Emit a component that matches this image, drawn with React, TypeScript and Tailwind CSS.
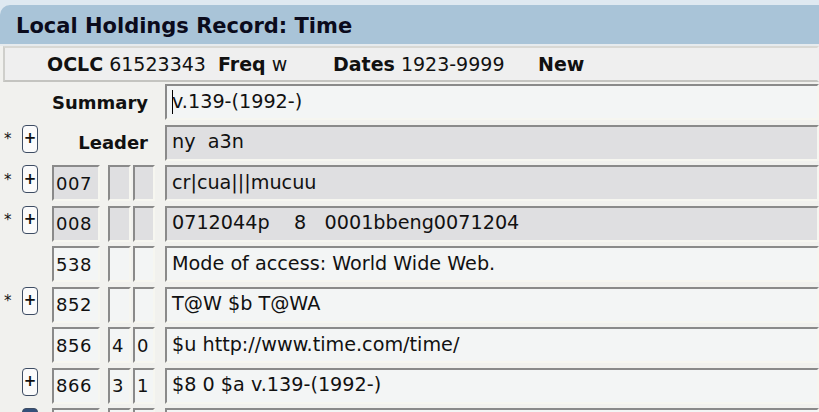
import React from "react";

type Row = {
  star?: boolean;
  plus?: boolean;
  plusDark?: boolean;
  label?: string;
  tag?: string;
  i1?: string;
  i2?: string;
  data: string;
  ro?: boolean;
  cursor?: boolean;
};

const rows: Row[] = [
  { label: "Summary", data: "v.139-(1992-)", cursor: true },
  { star: true, plus: true, label: "Leader", data: "ny  a3n", ro: true },
  { star: true, plus: true, tag: "007", i1: "", i2: "", data: "cr|cua|||mucuu", ro: true },
  { star: true, plus: true, tag: "008", i1: "", i2: "", data: "0712044p    8   0001bbeng0071204", ro: true },
  { tag: "538", i1: "", i2: "", data: "Mode of access: World Wide Web." },
  { star: true, plus: true, tag: "852", i1: "", i2: "", data: "T@W $b T@WA" },
  { tag: "856", i1: "4", i2: "0", data: "$u http://www.time.com/time/" },
  { plus: true, tag: "866", i1: "3", i2: "1", data: "$8 0 $a v.139-(1992-)" },
  { plus: true, plusDark: true, tag: "", i1: "", i2: "", data: "" },
];

function Box({ ro, className, children }: { ro?: boolean; className?: string; children?: React.ReactNode }) {
  return (
    <div
      className={
        "h-[36px] flex items-center border-2 border-t-[#8a8a8a] border-l-[#8a8a8a] border-b-[#f6f6f0] border-r-[#f6f6f0] " +
        (ro ? "bg-[#dfdfe1] " : "bg-[#f3f5f5] ") +
        (className || "")
      }
    >
      {children}
    </div>
  );
}

export default function App() {
  return (
    <div
      className="w-[819px] h-[412px] overflow-hidden bg-[#f1f1ee] text-[#111]"
      style={{ fontFamily: '"DejaVu Sans", Verdana, sans-serif' }}
    >
      <div className="bg-[#dfe9f1] pt-[5px]">
        <div className="h-[39px] bg-[#a9c4d8] rounded-tl-[10px] flex items-center pl-[16px] pt-[4px]">
          <span className="text-[21px] font-bold text-[#0b0b1c]">Local Holdings Record: Time</span>
        </div>
      </div>
      <div className="h-[2px] bg-[#e6ebee]" />
      <div className="ml-[3px] h-[36px] border-2 border-t-[#d8d8d4] border-l-[#cfcfcb] border-b-[#c4c4c0] border-r-transparent bg-[#efefef] flex items-center pl-[42px] text-[19px] whitespace-pre">
        <span className="inline-block w-[171px]">
          <span className="font-bold">OCLC</span> 61523343
        </span>
        <span className="inline-block w-[115px]">
          <span className="font-bold">Freq</span> w
        </span>
        <span className="inline-block w-[205px]">
          <span className="font-bold">Dates</span> 1923-9999
        </span>
        <span className="font-bold">New</span>
      </div>
      <div className="flex flex-col">
        {rows.map((r, idx) => (
          <div key={idx} className="h-[40.5px] flex items-center shrink-0">
            <div className="w-[22px] pl-[4px] text-[15px] leading-none mb-[6px]">{r.star ? "*" : ""}</div>
            <div className="w-[30px]">
              {r.plus ? (
                <div
                  className={
                    "w-[16px] h-[28px] mb-[8px] rounded-[4px] border-[1.5px] border-[#3d4c63] flex items-center justify-center text-[15px] font-bold leading-none " +
                    (r.plusDark ? "bg-[#34507a]" : "bg-[#fbfbfb]")
                  }
                >
                  {r.plusDark ? "" : "+"}
                </div>
              ) : null}
            </div>
            {r.label ? (
              <div className="w-[113px] pr-[17px] text-right font-bold text-[18px]">{r.label}</div>
            ) : (
              <div className="w-[113px] flex items-center">
                <Box ro={r.ro} className="w-[48px] pl-[2px] text-[18px] tracking-[0.5px]">{r.tag}</Box>
                <Box ro={r.ro} className="ml-[8px] w-[23px] pl-[2px] text-[18px]">{r.i1}</Box>
                <Box ro={r.ro} className="ml-[2px] w-[22px] pl-[2px] text-[18px]">{r.i2}</Box>
              </div>
            )}
            <Box ro={r.ro} className="flex-1 pl-[5px] text-[19.2px] whitespace-pre">
              {r.cursor ? <span className="inline-block w-px h-[24px] bg-black mr-[-1px]" /> : null}
              {r.data}
            </Box>
          </div>
        ))}
      </div>
    </div>
  );
}
